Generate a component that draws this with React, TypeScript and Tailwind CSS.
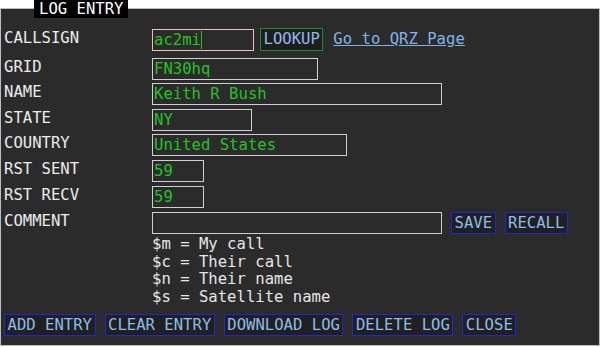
import React from "react";

function Field({ w, value, focused }: { w: string; value: string; focused?: boolean }) {
  return (
    <div
      className={`${w} h-[22px] border ${focused ? "border-[#e9bfb7]" : "border-[#cfcfcf]"} bg-[#2b2b2b] px-[1px] leading-[20px] text-[#22c322] flex items-center whitespace-pre`}
    >
      <span>{value}</span>
      {focused ? <span className="inline-block w-[1px] h-[18px] bg-[#22c322]" /> : null}
    </div>
  );
}

function Btn({ children, green }: { children: React.ReactNode; green?: boolean }) {
  return (
    <div
      className={`h-[22px] border ${green ? "border-[#23843a]" : "border-[#2424d6]"} bg-[#202020] px-[2.5px] leading-[20px] text-[#8cbcec] whitespace-pre`}
    >
      {children}
    </div>
  );
}

function Label({ children }: { children: React.ReactNode }) {
  return <div className="w-[148px] leading-[18px] text-[#ececec] whitespace-pre">{children}</div>;
}

export default function App() {
  return (
    <div className="w-[600px] h-[347px] bg-white relative font-['DejaVu_Sans_Mono','Liberation_Mono',monospace] text-[15.6px]">
      <div className="absolute left-0 top-[8px] w-[600px] h-[338px] border border-[#bdbdbd] bg-[#2b2b2b]">
        <div className="pl-[3px] pt-[19px] flex flex-col">
          <div className="flex items-start h-[30px]">
            <div className="mt-[1px]">
              <Label>CALLSIGN</Label>
            </div>
            <div className="mt-[1px]">
              <Field w="w-[102px]" value="ac2mi" focused />
            </div>
            <div className="ml-[6px]">
              <div className="h-[23px] border border-[#23843a] bg-[#1e1e1e] px-[2.5px] leading-[21px] text-[#8cbcec]">LOOKUP</div>
            </div>
            <div className="ml-[10px] mt-[1px] leading-[20px] text-[#7fb4e6] underline whitespace-pre">Go to QRZ Page</div>
          </div>
          <div className="flex items-start h-[25px]">
            <Label>GRID</Label>
            <Field w="w-[166px]" value="FN30hq" />
          </div>
          <div className="flex items-start h-[26px]">
            <Label>NAME</Label>
            <Field w="w-[290px]" value="Keith R Bush" />
          </div>
          <div className="flex items-start h-[25px]">
            <Label>STATE</Label>
            <Field w="w-[100px]" value="NY" />
          </div>
          <div className="flex items-start h-[26px]">
            <Label>COUNTRY</Label>
            <Field w="w-[195px]" value="United States" />
          </div>
          <div className="flex items-start h-[26px]">
            <Label>RST SENT</Label>
            <Field w="w-[52px]" value="59" />
          </div>
          <div className="flex items-start h-[26px]">
            <Label>RST RECV</Label>
            <Field w="w-[52px]" value="59" />
          </div>
          <div className="flex items-start h-[23px] gap-[9px]">
            <div className="flex items-start">
              <Label>COMMENT</Label>
              <Field w="w-[290px]" value="" />
            </div>
            <Btn>SAVE</Btn>
            <Btn>RECALL</Btn>
          </div>
          <div className="ml-[148px] mt-[1px] leading-[17.6px] text-[#e6e6e6] whitespace-pre">
            <div>$m = My call</div>
            <div>$c = Their call</div>
            <div>$n = Their name</div>
            <div>$s = Satellite name</div>
          </div>
          <div className="flex gap-[9px] mt-[8px]">
            <Btn>ADD ENTRY</Btn>
            <Btn>CLEAR ENTRY</Btn>
            <Btn>DOWNLOAD LOG</Btn>
            <Btn>DELETE LOG</Btn>
            <Btn>CLOSE</Btn>
          </div>
        </div>
      </div>
      <div className="absolute left-[34px] top-0 w-[94px] h-[18px] bg-black text-white pl-[5px] leading-[18px] whitespace-pre">LOG ENTRY</div>
    </div>
  );
}
